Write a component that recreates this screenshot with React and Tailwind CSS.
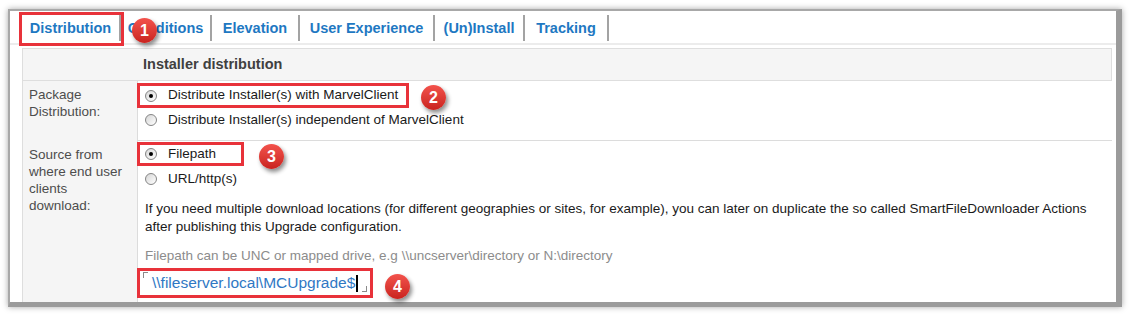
import React from 'react';

// ── Small pieces ─────────────────────────────────────────────────────────────
const Radio = ({ checked }) => (
  <span className="w-[12px] h-[12px] shrink-0 rounded-full border border-[#858585] bg-linear-to-br from-[#d6d6d6] to-white flex items-center justify-center">
    {checked && <span className="w-[4px] h-[4px] rounded-full bg-black" />}
  </span>
);

const Badge = ({ n, className }) => (
  <span
    className={
      'absolute z-20 w-[25px] h-[25px] rounded-full bg-linear-to-b from-[#f3524c] to-[#c9221e] flex items-center justify-center text-white font-bold text-[16px] leading-none shadow-[2px_3px_4px_rgba(0,0,0,0.45)] ' +
      className
    }
  >
    {n}
  </span>
);

const Sep = () => <span className="w-[2px] h-[26px] bg-[#a3a3a3] shrink-0" />;

const tabs = [
  { label: 'Conditions', w: 'w-[89px]' },
  { label: 'Elevation', w: 'w-[86px]' },
  { label: 'User Experience', w: 'w-[133px]' },
  { label: '(Un)Install', w: 'w-[88px]' },
  { label: 'Tracking', w: 'w-[82px]' },
];

const App = () => {
  return (
    <div className="w-[1134px] h-[314px] bg-white pt-[9px] pl-[8px] font-['Liberation_Sans',Arial,sans-serif]">
      <div className="w-[1114px] h-[298px] bg-white border-t-2 border-l-2 border-r-[6px] border-b-[5px] border-t-[#a8a8a8] border-l-[#a8a8a8] border-r-[#9b9b9b] border-b-[#9b9b9b] shadow-[0_0_6px_rgba(0,0,0,0.35)] flex flex-col">
        {/* ── Tab strip ─────────────────────────────────────────────── */}
        <div className="flex items-center pl-[9px] pt-[1px] h-[34px] border-b-2 border-[#ececec] shrink-0">
          <div className="relative w-[100px] h-[31px] flex items-center justify-center pl-[3px] pt-[3px] text-[14.5px] font-bold text-[#1e78c2]">
            Distribution
            <span className="absolute left-0 top-0 w-[105px] h-[34px] border-[3px] border-[#e8323a] z-10" />
            <Badge n="1" className="left-[113px] top-[6px]" />
          </div>
          <Sep />
          {tabs.map((t) => (
            <React.Fragment key={t.label}>
              <div className={'h-[31px] flex items-center justify-center pt-[3px] text-[14.5px] font-bold text-[#1e78c2] ' + t.w}>
                {t.label}
              </div>
              <Sep />
            </React.Fragment>
          ))}
        </div>

        {/* ── Settings table ────────────────────────────────────────── */}
        <div className="ml-[12px] mt-[3px] w-[1090px] flex-1 flex flex-col text-[13.5px]">
          <div className="h-[33px] shrink-0 bg-[#f5f5f5] border border-[#dedede] flex items-center pl-[120px] text-[14.5px] font-bold text-[#404040]">
            Installer distribution
          </div>

          {/* Package distribution */}
          <div className="h-[60px] shrink-0 flex">
            <div className="w-[115px] shrink-0 bg-[#f5f5f5] border-l border-[#dedede] pl-[6px] pt-[5px] leading-[17px] text-[#4d4d4d]">
              Package
              <br />
              Distribution:
            </div>
            <div className="flex-1 bg-white border-l border-b border-[#dcdcdc] text-[#1a1a1a]">
              <div className="relative mt-[2px] -ml-[1px] w-[272px] h-[25px] border-[3px] border-[#e8323a] flex items-center pl-[5px] gap-[11px]">
                <Radio checked />
                <span>Distribute Installer(s) with MarvelClient</span>
                <Badge n="2" className="left-[281px] -top-[1px]" />
              </div>
              <div className="h-[24px] flex items-center pl-[7px] gap-[11px]">
                <Radio />
                <span>Distribute Installer(s) independent of MarvelClient</span>
              </div>
            </div>
          </div>

          {/* Source */}
          <div className="flex-1 flex">
            <div className="w-[115px] shrink-0 bg-[#f5f5f5] border-l border-[#dedede] pl-[6px] pt-[5px] leading-[17px] text-[#4d4d4d]">
              Source from
              <br />
              where end user
              <br />
              clients
              <br />
              download:
            </div>
            <div className="flex-1 bg-white border-l border-[#dcdcdc] text-[#1a1a1a]">
              <div className="relative mt-[1px] -ml-[1px] w-[107px] h-[24px] border-[3px] border-[#e8323a] flex items-center pl-[5px] gap-[11px]">
                <Radio checked />
                <span>Filepath</span>
                <Badge n="3" className="left-[119px] -top-[1px]" />
              </div>
              <div className="h-[26px] flex items-center pl-[7px] gap-[11px]">
                <Radio />
                <span>URL/http(s)</span>
              </div>
              <div className="mt-[8px] pl-[7px] leading-[18px]">
                <div className="whitespace-nowrap">
                  If you need multiple download locations (for different geographies or sites, for example), you can later on duplicate the so called SmartFileDownloader Actions
                </div>
                <div>after publishing this Upgrade configuration.</div>
              </div>
              <div className="mt-[11px] pl-[7px] leading-[18px] text-[#8c8c8c]">
                Filepath can be UNC or mapped drive, e.g \\uncserver\directory or N:\directory
              </div>
              <div className="relative mt-[3px] -ml-[1px] w-[236px] h-[30px] border-[3px] border-[#e8323a] flex items-center pl-[3px]">
                <span className="self-start mt-[1px] w-[5px] h-[6px] border-t border-l border-[#8a8a8a]" />
                <span className="ml-[4px] text-[15.5px] text-[#2f78c4]">\\fileserver.local\MCUpgrade$</span>
                <span className="ml-[1px] w-[2px] h-[17px] bg-black" />
                <span className="self-end mb-[3px] ml-[4px] w-[5px] h-[6px] border-b border-r border-[#8a8a8a]" />
                <Badge n="4" className="left-[245px] top-[3px]" />
              </div>
            </div>
          </div>
        </div>
      </div>
    </div>
  );
};

export default App;
